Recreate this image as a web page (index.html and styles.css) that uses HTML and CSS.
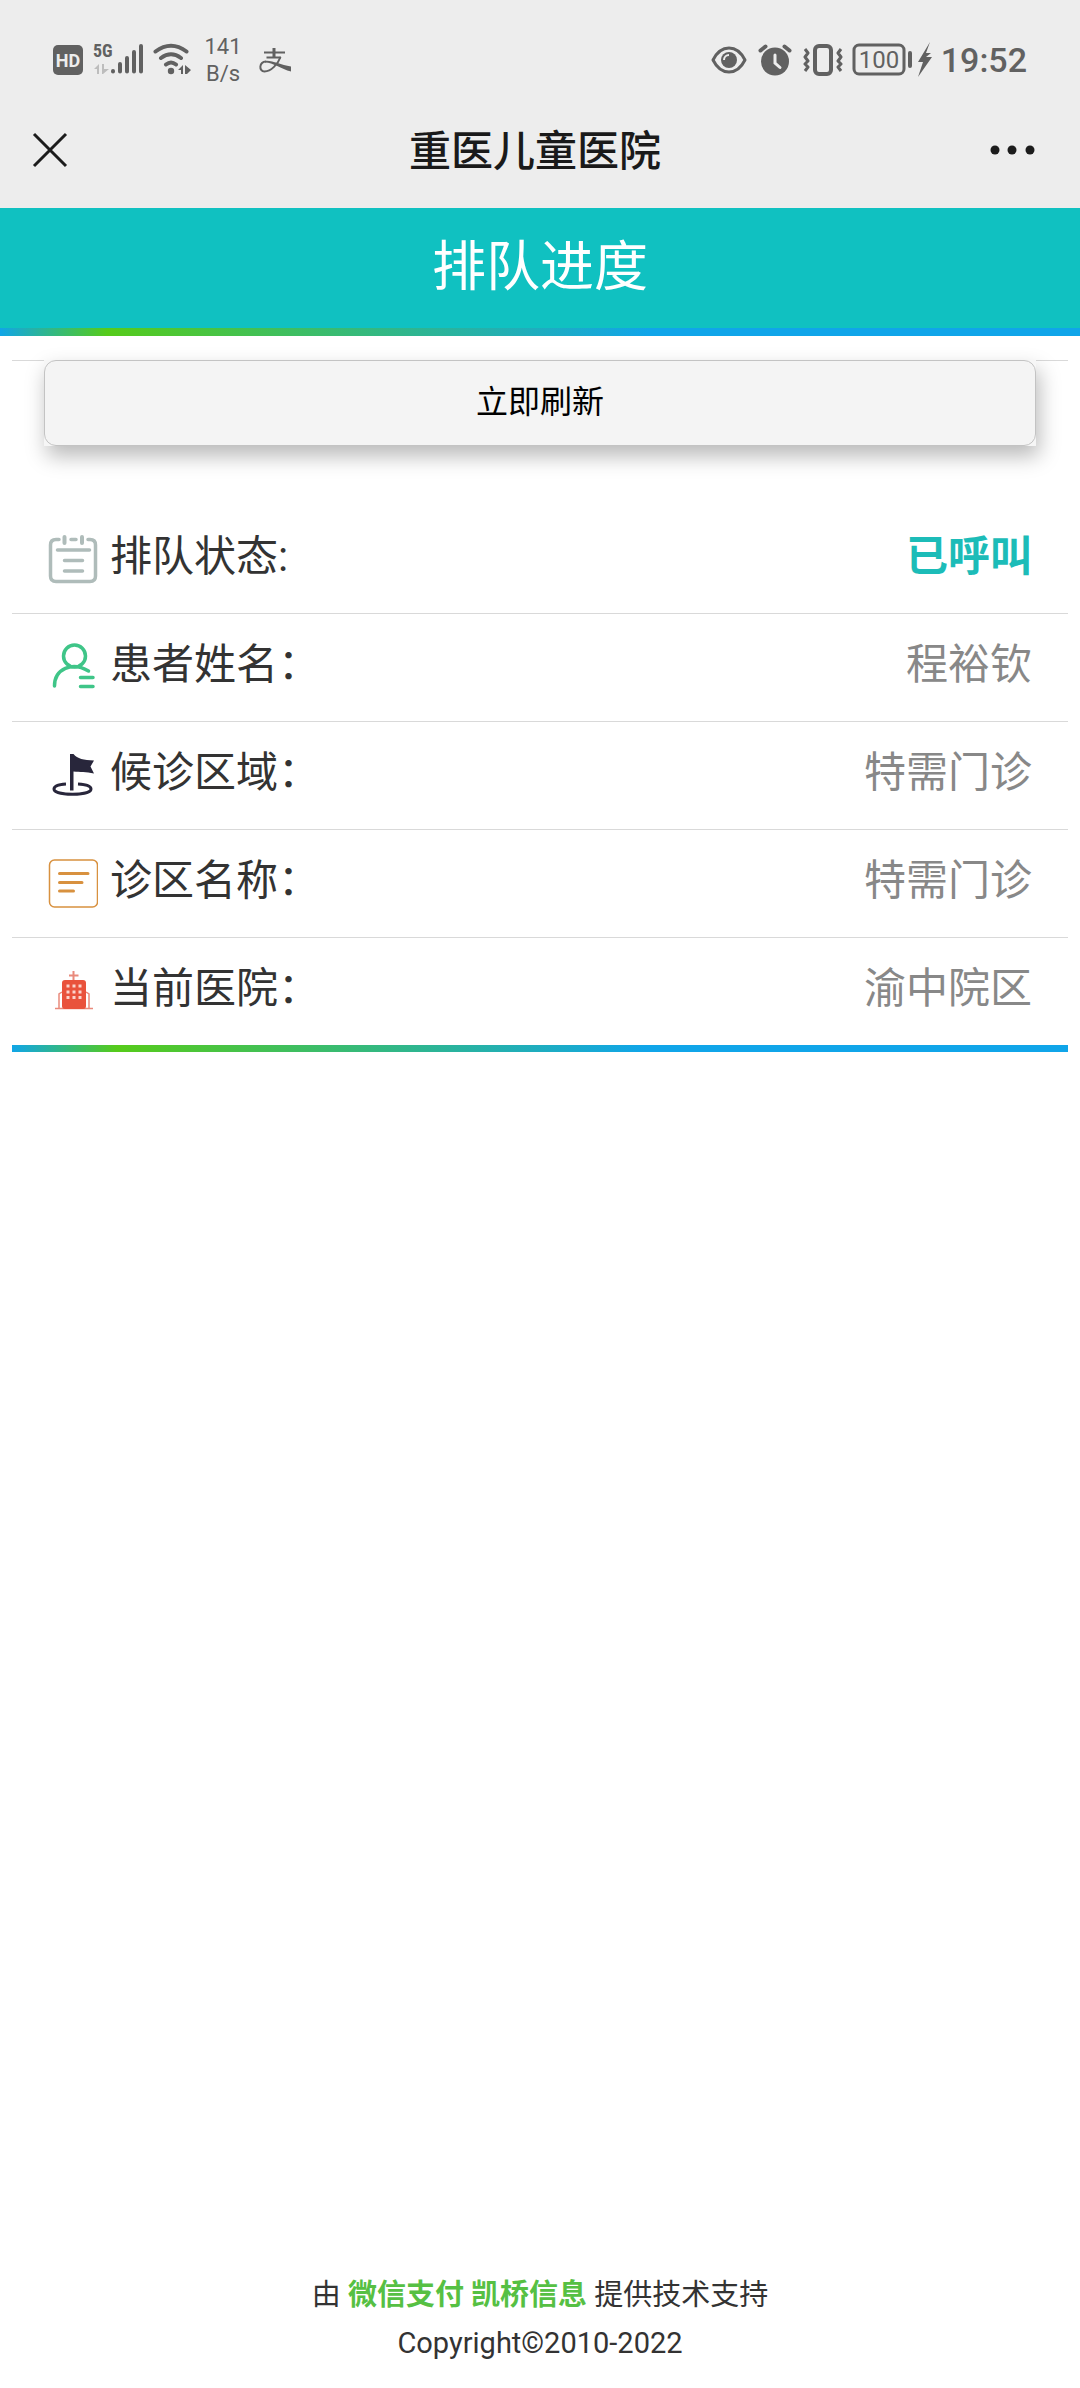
FILE: index.html
```html
<!DOCTYPE html>
<html lang="zh-CN">
<head>
  <meta charset="utf-8">
  <meta name="viewport" content="width=device-width, initial-scale=1">
  <title>重医儿童医院</title>
  <link rel="stylesheet" href="styles.css">
</head>
<body>
  <div class="chrome">
    <div class="status">
      <div class="status-group">
        <svg width="30" height="48" viewBox="0 0 30 48" aria-hidden="true">
          <rect y="9" width="30" height="30" rx="5" fill="#616161"/>
          <text class="badge-text" x="15" y="31" text-anchor="middle">HD</text>
        </svg>
        <svg width="50" height="48" viewBox="0 0 50 48" aria-hidden="true">
          <text class="net-text" x="0" y="21">5G</text>
          <path d="M1 33l5-5v10H4v-5zM9 28h2v5h5l-6 5H9z" fill="#bdbdbd"/>
          <path d="M20 35v.5M27 28v7.500M34 22v13.500M41 16v19.500M48 10v25.500" stroke="#616161" stroke-width="4" stroke-linecap="round"/>
        </svg>
        <svg width="40" height="48" viewBox="0 0 40 48" fill="none" stroke="#616161" stroke-width="4" stroke-linecap="round" aria-hidden="true">
          <path d="M2.500 15.500Q18 4 33.500 15.500M8 22Q18 14.500 28 22M13 28.500Q18 24.500 23 28.500"/>
          <circle cx="18" cy="35" r="3.200" fill="#616161" stroke="none"/>
          <path d="M25 34l5-5v9h-2v-4zM32 29l6 5-4 4h-2z" fill="#616161" stroke="none"/>
        </svg>
        <span class="speed">141<br>B/s</span>
        <svg width="40" height="48" viewBox="0 0 40 48" fill="none" stroke="#616161" aria-hidden="true">
          <path d="M11 16.500h21M13.500 21.500H28" stroke-width="2"/>
          <path d="M21 12v10" stroke-width="3"/>
          <path d="M27.500 21C25 28 18 35.500 11.500 35.500 5.500 35 6 26 13 25.500" stroke-width="2"/>
          <path d="M12 25c7-1 15 4 26 5.500v5C28 33 20 26.500 12 26.500z" fill="#616161" stroke="none"/>
        </svg>
      </div>
      <div class="status-group status-group-end">
        <svg width="36" height="48" viewBox="0 0 36 48" aria-hidden="true">
          <path d="M2 24C10 8 26 8 34 24 26 40 10 40 2 24z" fill="none" stroke="#616161" stroke-width="3" stroke-linejoin="round"/>
          <circle cx="18" cy="24" r="8" fill="#616161"/>
          <path d="M13 24a5 5 0 0 1 5-5" fill="none" stroke="#ededed" stroke-width="2"/>
        </svg>
        <svg width="38" height="48" viewBox="0 0 38 48" fill="none" stroke-linecap="round" aria-hidden="true">
          <circle cx="19" cy="25.500" r="14" fill="#616161"/>
          <path d="M4.500 14.500l5-4M28.500 10.500l5 4" stroke="#616161" stroke-width="4"/>
          <path d="M19 19v8l5 4.500" stroke="#ededed" stroke-width="3"/>
        </svg>
        <svg width="40" height="48" viewBox="-2 0 40 48" fill="none" stroke="#616161" stroke-width="3" stroke-linejoin="round" aria-hidden="true">
          <rect x="10" y="10" width="16" height="28" rx="4" stroke-width="4"/>
          <path d="M0 13l3 4-3 4 3 4-3 3 3 3-3 4M36 13l-3 4 3 4-3 4 3 3-3 3 3 4"/>
        </svg>
        <svg width="80" height="48" viewBox="0 0 80 48" aria-hidden="true">
          <rect x="2" y="9" width="50" height="29" rx="5" fill="none" stroke="#616161" stroke-width="3"/>
          <text class="battery-text" x="27" y="32" text-anchor="middle">100</text>
          <rect x="56" y="15" width="4" height="17" rx="2" fill="#616161"/>
          <path d="M78 6L66 26h5l-5 15 14-20h-6l5-4h-5z" fill="#616161"/>
        </svg>
        <time class="clock">19:52</time>
      </div>
    </div>
    <nav class="nav">
      <button class="icon-button" type="button" aria-label="关闭">
        <svg width="36" height="36" viewBox="0 0 36 36"><path d="M2 2l32 32M34 2L2 34" stroke="#1c1c1c" stroke-width="3"/></svg>
      </button>
      <span class="nav-title">重医儿童医院</span>
      <button class="icon-button icon-button-end" type="button" aria-label="更多">
        <svg width="48" height="36" viewBox="0 0 48 36" fill="#1c1c1c"><circle cx="5" cy="18" r="4.500"/><circle cx="22" cy="18" r="4.500"/><circle cx="40" cy="18" r="4.500"/></svg>
      </button>
    </nav>
  </div>

  <header class="banner">
    <h1>排队进度</h1>
  </header>

  <main class="panel">
    <div class="refresh">
      <button class="refresh-button" type="button">立即刷新</button>
    </div>
    <dl class="details">
      <div class="row">
        <dt>
          <svg class="icon" viewBox="0 0 50 50" fill="none" stroke="#afbcba" stroke-width="3.500" stroke-linecap="round">
            <path d="M11 4.500H8Q2.500 4.500 2.500 10V41Q2.500 46.500 8 46.500H42Q47.500 46.500 47.500 41V10Q47.500 4.500 42 4.500H40M23 4.500h5"/>
            <path d="M16.500 2v6M34 2v6" stroke-width="4"/>
            <path d="M9.500 15h32M16.500 25.500h18M16.500 36h18"/>
          </svg>
          排队状态:
        </dt>
        <dd class="called">已呼叫</dd>
      </div>
      <div class="row">
        <dt>
          <svg class="icon" viewBox="0 0 50 50" fill="none" stroke="#3fc588" stroke-width="3.500" stroke-linecap="round">
            <circle cx="26.500" cy="13" r="11"/>
            <path d="M6.500 43C6.500 26 24 18 40.500 28M32.500 34.500h12.500M32.500 43.500h12.500"/>
          </svg>
          患者姓名：
        </dt>
        <dd>程裕钦</dd>
      </div>
      <div class="row">
        <dt>
          <svg class="icon" viewBox="0 0 50 50">
            <path d="M22 3h3.500c4 5 10 6 20.500 6.500l-3.500 6 3.500 7c-8-2-14-1-20.500-2v19H22z" fill="#28263b"/>
            <path d="M18 33C9 33.500 6 35.500 6 38c0 7 37 7 37 0 0-2.500-4-4.500-13-5" fill="none" stroke="#28263b" stroke-width="3"/>
          </svg>
          候诊区域：
        </dt>
        <dd>特需门诊</dd>
      </div>
      <div class="row">
        <dt>
          <svg class="icon" viewBox="0 0 50 50" fill="none" stroke="#d8913f" stroke-linecap="round">
            <rect x="1.500" y="1" width="48" height="47" rx="5" stroke-width="1.500"/>
            <path d="M11.500 14.500H40M11.500 23.500H34M11.500 32H25.500" stroke-width="3"/>
          </svg>
          诊区名称：
        </dt>
        <dd>特需门诊</dd>
      </div>
      <div class="row">
        <dt>
          <svg class="icon" viewBox="0 0 50 50" fill="none" stroke="#e98a7c">
            <path d="M25.500 4v10M21 8.500h9.500" stroke-width="2"/>
            <path d="M14 25l-3 2v15M38 25l3 2v15M7 41.500h38" stroke-width="1.500"/>
            <rect x="14" y="13" width="24" height="29" rx="3" fill="#e9523c" stroke="none"/>
            <path d="M18.500 19h3M24.500 19h3M30.500 19h3M18.500 25h3M24.500 25h3M30.500 25h3M18.500 30.500h3M24.500 30.500h3M30.500 30.500h3" stroke="#fbd3cc" stroke-width="3"/>
          </svg>
          当前医院：
        </dt>
        <dd>渝中院区</dd>
      </div>
    </dl>
  </main>

  <footer class="footer">
    <p>由 <strong>微信支付 凯桥信息</strong> 提供技术支持</p>
    <p>Copyright©2010-2022</p>
  </footer>
</body>
</html>
```
FILE: styles.css
```css
* {
  box-sizing: border-box;
}

body {
  display: flex;
  flex-direction: column;
  min-height: 100vh;
  margin: 0;
  background: #fff;
  color: #333;
  font-family: Roboto, "Noto Sans CJK SC", sans-serif;
}

svg {
  display: block;
  flex: none;
}

h1, p, dl, dt, dd {
  margin: 0;
}

button {
  padding: 0;
  font-family: inherit;
  cursor: pointer;
}

/* Phone status bar and title bar */
.chrome {
  background: #ededed;
}

.status {
  display: flex;
  justify-content: space-between;
  height: 92px;
  padding: 28px 53px 0;
  color: #616161;
}

.status-group {
  display: flex;
  align-items: center;
  gap: 10px;
}

.status-group-end {
  gap: 9px;
}

.badge-text {
  fill: #ededed;
  font-size: 18px;
  font-weight: 700;
}

.net-text {
  fill: #616161;
  font-family: "Roboto Condensed", "Liberation Sans Narrow", Roboto, sans-serif;
  font-size: 18px;
  font-weight: 700;
}

.battery-text {
  fill: #616161;
  font-size: 24px;
}

.speed {
  width: 40px;
  font-size: 22px;
  line-height: 27px;
  text-align: center;
}

.clock {
  font-size: 34px;
  font-weight: 500;
  line-height: 48px;
}

.nav {
  display: grid;
  grid-template-columns: 1fr auto 1fr;
  align-items: center;
  height: 116px;
  padding: 0 42px 0 32px;
}

.icon-button {
  justify-self: start;
  border: 0;
  background: none;
}

.icon-button-end {
  justify-self: end;
}

.nav-title {
  padding-top: 4px;
  color: #1a1a1a;
  font-size: 42px;
  font-weight: 500;
  line-height: 60px;
}

/* Page heading and the coloured rule below it */
.banner,
.details {
  border-style: solid;
  border-width: 0 0 8px;
  border-image: linear-gradient(90deg, #10a5e9, #56cb1a 10%, #10a5e9 60%) 1;
}

.banner {
  background: #10c1c1;
  color: #fff;
  text-align: center;
}

.banner h1 {
  font-size: 54px;
  font-weight: 400;
  line-height: 80px;
  padding: 20px 0;
}

/* Queue details */
.panel {
  flex: 1;
  margin: 24px 12px 0;
  box-shadow: inset 0 1px #d9d9d9;
}

.refresh {
  margin: 0 32px 60px;
  background: #f6f6f6;
  box-shadow: 3px 10px 20px rgba(0, 0, 0, 0.28);
}

.refresh-button {
  display: block;
  width: 100%;
  height: 86px;
  padding-bottom: 8px;
  border: 1px solid #c3c3c3;
  border-radius: 12px;
  background: #f4f4f4;
  color: #000;
  font-size: 32px;
}

.details {
  border-bottom-width: 7px;
}

.row {
  display: flex;
  align-items: center;
  justify-content: space-between;
  padding: 23px 36px 28px;
  border-bottom: 1px solid #d9d9d9;
  font-size: 42px;
  line-height: 56px;
}

.row:last-child {
  border-bottom: 0;
}

.row dt {
  display: flex;
  align-items: flex-end;
  gap: 12px;
}

.row dd {
  color: #888;
}

.row .called {
  color: #1cbcb8;
  font-weight: 700;
}

.icon {
  width: 50px;
  height: 50px;
}

.footer {
  padding-bottom: 21px;
  font-size: 29px;
  line-height: 48px;
  text-align: center;
}

.footer strong {
  color: #56c043;
}
```
